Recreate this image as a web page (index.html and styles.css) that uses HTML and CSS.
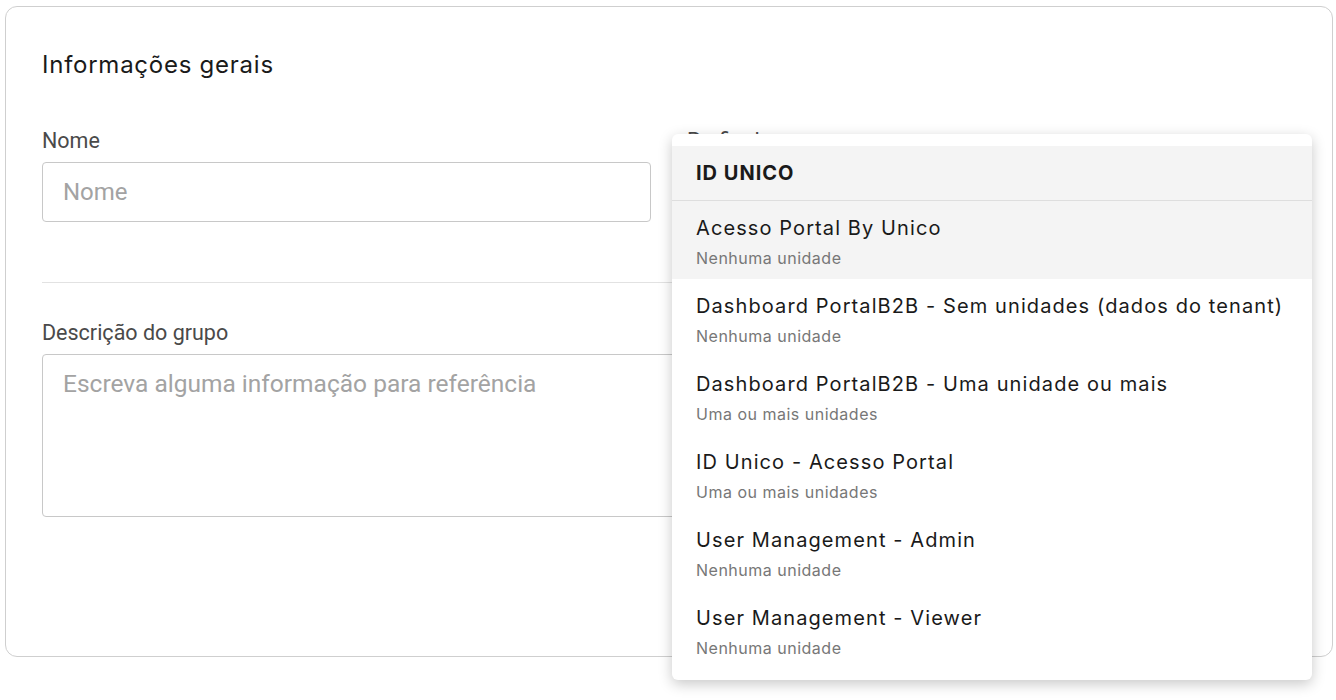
FILE: index.html
```html
<!DOCTYPE html>
<html lang="pt-BR">

<head>
    <meta charset="UTF-8">
    <meta name="viewport" content="width=device-width, initial-scale=1.0">
    <title>Informações gerais</title>
    <link rel="stylesheet" href="styles.css">
</head>

<body>
    <div class="card">
        <h2 class="title">Informações gerais</h2>
        <div class="row">
            <div class="field">
                <label class="label">Nome</label>
                <input class="input" type="text" placeholder="Nome">
            </div>
            <div class="field profile">
                <label class="label">Perfis de acesso</label>
                <div class="input"></div>
                <div class="menu">
                    <div class="menuHead">ID UNICO</div>
                    <div class="option active">
                        <div class="optName">Acesso Portal By Unico</div>
                        <div class="optSub">Nenhuma unidade</div>
                    </div>
                    <div class="option">
                        <div class="optName">Dashboard PortalB2B - Sem unidades (dados do tenant)</div>
                        <div class="optSub">Nenhuma unidade</div>
                    </div>
                    <div class="option">
                        <div class="optName">Dashboard PortalB2B - Uma unidade ou mais</div>
                        <div class="optSub">Uma ou mais unidades</div>
                    </div>
                    <div class="option">
                        <div class="optName">ID Unico - Acesso Portal</div>
                        <div class="optSub">Uma ou mais unidades</div>
                    </div>
                    <div class="option">
                        <div class="optName">User Management - Admin</div>
                        <div class="optSub">Nenhuma unidade</div>
                    </div>
                    <div class="option">
                        <div class="optName">User Management - Viewer</div>
                        <div class="optSub">Nenhuma unidade</div>
                    </div>
                </div>
            </div>
        </div>
        <hr class="divider">
        <div class="field">
            <label class="label">Descrição do grupo</label>
            <textarea class="textarea" placeholder="Escreva alguma informação para referência"></textarea>
        </div>
    </div>
</body>

</html>
```

FILE: styles.css
```css
* {
    box-sizing: border-box;
}

body {
    margin: 0;
    min-height: 700px;
    padding: 6px 3px 0 5px;
    background: #fff;
    font-family: Roboto, "Liberation Sans", sans-serif;
}

.card {
    border: 1px solid #cfcfcf;
    border-radius: 12px;
    background: #fff;
    padding: 42px 36px 139px;
}

.title {
    margin: 0 0 49px;
    font: 400 24px/32px Inter, "Liberation Sans", sans-serif;
    letter-spacing: 0.75px;
    color: #1a1a1a;
}

.row {
    display: grid;
    grid-template-columns: 1fr 1fr;
    gap: 36px;
}

.field {
    display: flex;
    flex-direction: column;
}

.profile {
    position: relative;
}

.label {
    font-size: 21.5px;
    line-height: 22px;
    color: #4a4a4a;
    margin-bottom: 10px;
}

.input,
.textarea {
    width: 100%;
    height: 60px;
    border: 1px solid #c8c8c8;
    border-radius: 4px;
    padding: 0 20px;
    font: 24px Roboto, "Liberation Sans", sans-serif;
    color: #333;
    background: #fff;
    outline: none;
}

.textarea {
    height: 163px;
    padding: 14px 20px;
    font-size: 24.5px;
    resize: none;
}

.input::placeholder,
.textarea::placeholder {
    color: #a3a3a3;
}

.divider {
    border: 0;
    border-top: 1px solid #e2e2e2;
    margin: 60px 0 39px;
}

.menu {
    position: absolute;
    top: 4px;
    left: -15px;
    right: -16px;
    z-index: 2;
    background: #fff;
    border-radius: 6px;
    padding: 12px 0 11px;
    box-shadow: 0 4px 14px rgba(0, 0, 0, 0.22);
    font-family: Inter, "Liberation Sans", sans-serif;
}

.menuHead {
    height: 55px;
    padding: 0 24px;
    background: #f4f4f4;
    border-bottom: 1px solid #dedede;
    font-size: 20px;
    font-weight: 700;
    letter-spacing: 1px;
    line-height: 54px;
    color: #1a1a1a;
}

.option {
    height: 78px;
    padding: 14px 24px 11px;
}

.option.active {
    background: #f4f4f4;
}

.optName {
    font-size: 20px;
    line-height: 26px;
    letter-spacing: 1.1px;
    color: #1a1a1a;
}

.optSub {
    margin-top: 7px;
    font-size: 16px;
    line-height: 20px;
    letter-spacing: 0.5px;
    color: #777;
}
```
